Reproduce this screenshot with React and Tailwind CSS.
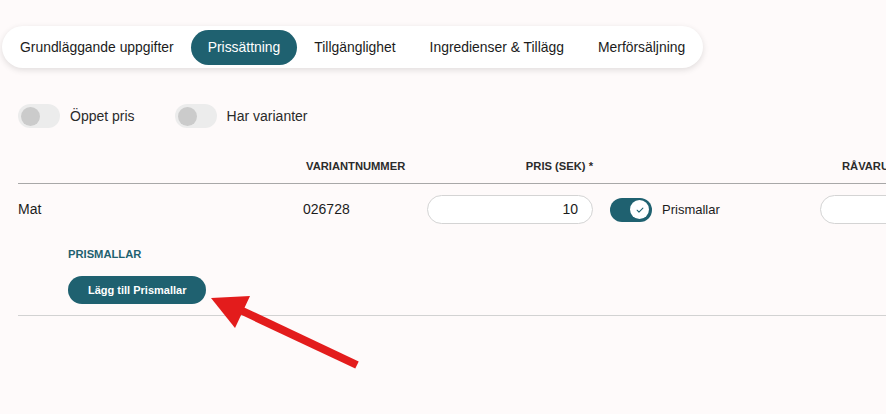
import React from 'react';

const tabs = ['Grundläggande uppgifter', 'Prissättning', 'Tillgänglighet', 'Ingredienser & Tillägg', 'Merförsäljning'];

function Toggle({ on }) {
  if (on) {
    return (
      <div className="w-[42px] h-[24px] rounded-full bg-[#1f6170] flex items-center justify-end pr-[3px] shrink-0">
        <div className="w-[19px] h-[19px] rounded-full bg-white flex items-center justify-center">
          <svg width="10" height="10" viewBox="0 0 24 24" fill="none" stroke="#1f6170" strokeWidth="2.5" strokeLinecap="round" strokeLinejoin="round">
            <path d="M5 12.5l4.5 4.5L19 7.5" />
          </svg>
        </div>
      </div>
    );
  }
  return (
    <div className="w-[42px] h-[24px] rounded-full bg-[#ececec] flex items-center pl-[3px] shrink-0">
      <div className="w-[19px] h-[19px] rounded-full bg-[#cbcbcb]" />
    </div>
  );
}

export default function App() {
  return (
    <div
      className="relative w-[886px] h-[414px] overflow-hidden bg-[#fefafa] text-[#1c1c1c]"
      style={{ fontFamily: '"Liberation Sans", Arial, sans-serif' }}
    >
      {/* tabs */}
      <div className="pt-[26px] pl-[2px]">
        <div className="inline-flex items-center h-[42px] px-px rounded-full bg-white shadow-[0_2px_6px_rgba(0,0,0,0.12)]">
          {tabs.map((t) => (
            <div
              key={t}
              className={
                t === 'Prissättning'
                  ? 'h-[35px] px-[17px] flex items-center rounded-full bg-[#1f6170] text-white text-[13.9px]'
                  : 'h-[35px] px-[17px] flex items-center text-[13.9px]'
              }
            >
              {t}
            </div>
          ))}
        </div>
      </div>

      {/* switches */}
      <div className="flex items-center mt-[36px] ml-[18px]">
        <Toggle />
        <span className="ml-[10px] text-[14px] text-[#2a2a2a]">Öppet pris</span>
        <div className="ml-[40px]">
          <Toggle />
        </div>
        <span className="ml-[10px] text-[14px] text-[#2a2a2a]">Har varianter</span>
      </div>

      {/* table */}
      <div className="ml-[18px] mt-[22px] w-[1100px]">
        <div className="flex items-center h-[34px] border-b border-[#a8a8a8] text-[11.2px] font-bold text-[#2b2b2b]">
          <div className="w-[285px]" />
          <div className="w-[124px] pl-[3px]">VARIANTNUMMER</div>
          <div className="w-[166px] text-right">PRIS (SEK) *</div>
          <div className="w-[227px]" />
          <div className="pl-[22px] whitespace-nowrap">RÅVARUKOSTNAD (SEK)</div>
        </div>

        <div className="flex items-center pt-[11px] text-[14px]">
          <div className="w-[285px]">Mat</div>
          <div className="w-[124px]">026728</div>
          <div className="w-[166px]">
            <div className="h-[29px] rounded-full bg-white border border-[#d4d4d4] flex items-center justify-end pr-[14px]">
              10
            </div>
          </div>
          <div className="w-[227px] pl-[17px] flex items-center">
            <Toggle on />
            <span className="ml-[10px] text-[13px]">Prismallar</span>
          </div>
          <div className="w-[166px]">
            <div className="h-[29px] rounded-full bg-white border border-[#d4d4d4]" />
          </div>
        </div>

        <div className="pl-[50px] pt-[22px] pb-[11px] border-b border-[#d2d2d2]">
          <div className="text-[11.2px] font-bold text-[#1f6170]">PRISMALLAR</div>
          <button className="mt-[13px] h-[28px] px-[20px] rounded-full bg-[#1f6170] text-white text-[11px] font-bold">
            Lägg till Prismallar
          </button>
        </div>
      </div>

      {/* annotation arrow */}
      <svg className="absolute left-0 top-0 pointer-events-none" width="886" height="414">
        <line x1="357" y1="365" x2="236" y2="308" stroke="#e31c1c" strokeWidth="8" />
        <polygon points="211,298 250,296 235,328" fill="#e31c1c" />
      </svg>
    </div>
  );
}
